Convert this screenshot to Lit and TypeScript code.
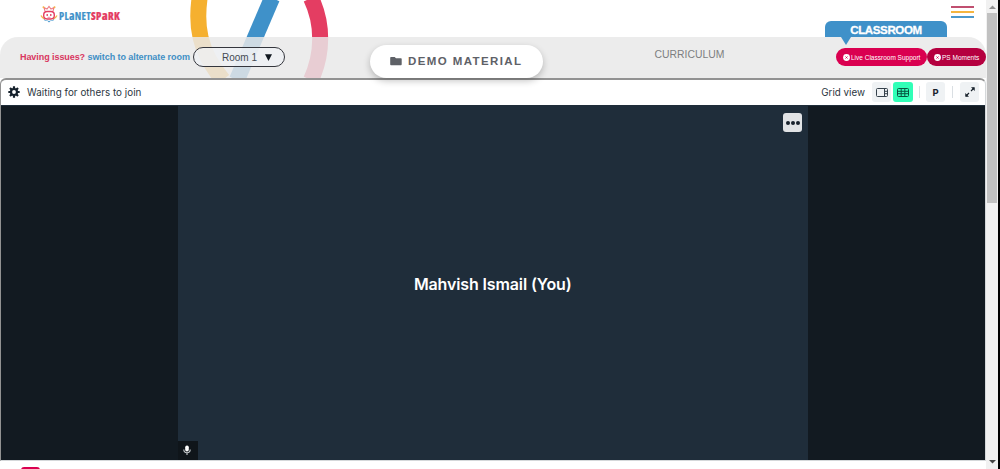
import { LitElement, css, html, svg } from "lit"
import { customElement, property } from "lit/decorators.js"

const gearTeeth = [0, 45, 90, 135, 180, 225, 270, 315]

@customElement("page-header")
export class PageHeader extends LitElement {
  render() {
    return html`
      <svg class="rings" width="145" height="78" viewBox="186 0 145 78">
        <path d="M199.600 -2C196 24 198 50 223 80" stroke="#f5b02f" />
        <path d="M272 -2L237 80" stroke="#3f91c9" />
        <path d="M311 -2C323.500 24 323 54 311 80" stroke="#e43d62" />
      </svg>
      <div class="top">
        <div class="logo">
          <svg width="18" height="18" viewBox="0 0 18 18" fill="none">
            <path d="M3 13Q9 19 15 13L13.500 15.500 10.500 16 9 17.500 7.500 16 4.500 15.500Z" fill="#4a9bd0" />
            <path d="M1 10.500Q2.500 13.500 5 14.200M17 10.500Q15.500 13.500 13 14.200" stroke="#f5b64a" stroke-width="1.400" />
            <rect x="3.700" y="6.500" width="10.600" height="7.500" rx="3.400" fill="#fff" stroke="#e43d62" stroke-width="1.400" />
            <path d="M5 6L4 2.500 7 4 9 1.500 11 4 14 2.500 13 6" stroke="#ee7b83" stroke-width="1.100" />
            <circle cx="3.500" cy="2.300" r="1" fill="#f5b64a" />
            <circle cx="14.500" cy="2.300" r="1" fill="#f5b64a" />
            <path d="M7.200 9V11M10.800 9V11" stroke="#e43d62" stroke-width="1.300" />
            <path d="M7.500 12.300H10.500" stroke="#e43d62" stroke-width=".6" />
          </svg>
          <span class="brand">PL<span class="small">a</span>NET<b>SP<span class="small">a</span>RK</b></span>
        </div>
        <div class="burger"><i></i><i></i><i></i></div>
        <div class="classroom">CLASSROOM</div>
      </div>
      <div class="bar">
        <span class="issues">Having issues? <span>switch to alternate room</span></span>
        <div class="room">
          <span>Room 1</span>
          <svg width="7" height="7" viewBox="0 0 7 7"><path d="M0 .3H7L3.500 7Z" fill="#111820" /></svg>
        </div>
        <div class="demo">
          <svg width="12" height="10" viewBox="0 0 12 10">
            <path d="M1 1H4.700L6 2.200H11Q11.700 2.200 11.700 3V8.300Q11.700 9.200 11 9.200H1Q.2 9.200 .2 8.300V1.800Q.2 1 1 1Z" fill="#5e6167" />
          </svg>
          <span>DEMO MATERIAL</span>
        </div>
        <span class="curriculum">CURRICULUM</span>
        <div class="actions">
          <div class="pill support">${this.dot()}<span>Live Classroom Support</span></div>
          <div class="pill moments">${this.dot()}<span>PS Moments</span></div>
        </div>
      </div>
    `
  }

  dot() {
    return html`<svg width="7" height="7" viewBox="0 0 7 7">
      <circle cx="3.500" cy="3.500" r="3.400" fill="#fff" />
      <path d="M2.500 2.500L4.500 4.500M4.500 2.500L2.500 4.500" stroke="#d40050" stroke-width=".9" />
    </svg>`
  }

  static styles = css`
    :host {
      display: block;
      position: relative;
      height: 78px;
      font-family: "Liberation Sans", Arial, sans-serif;
      white-space: nowrap;
    }
    svg {
      display: block;
      flex: none;
    }
    .rings {
      position: absolute;
      left: 186px;
      top: 0;
      fill: none;
      stroke-width: 16px;
    }
    .top {
      display: flex;
      height: 37px;
      justify-content: space-between;
      box-sizing: border-box;
      padding: 5px 12px 0 40px;
    }
    .logo {
      display: flex;
      gap: 1px;
      height: 18px;
    }
    .brand {
      color: #3f91c9;
      font: 700 10.4px/21px "Open Sans", sans-serif;
      font-stretch: 75%;
      letter-spacing: 0.3px;
      -webkit-text-stroke: 0.2px currentColor;
    }
    .brand b {
      color: #e43d62;
    }
    .small {
      font-size: 12px;
    }
    .burger {
      display: flex;
      flex-direction: column;
      gap: 3px;
      padding-top: 1px;
    }
    .burger i {
      width: 23px;
      height: 2px;
      background: #c04f70;
    }
    .burger i:nth-child(2) {
      background: #f5b540;
    }
    .burger i:nth-child(3) {
      background: #4c98cb;
    }
    .classroom {
      position: absolute;
      left: 825px;
      top: 21px;
      width: 122px;
      height: 16px;
      border-radius: 6px 6px 0 0;
      background: #3f91c9;
      color: #fff;
      font-size: 11.5px;
      font-weight: bold;
      line-height: 18px;
      text-align: center;
      letter-spacing: -0.35px;
      -webkit-text-stroke: 0.3px #fff;
      z-index: 2;
    }
    .classroom::after {
      content: "";
      position: absolute;
      left: 16px;
      top: 16px;
      border: solid transparent;
      border-width: 8px 5px 0;
      border-top-color: #3f91c9;
    }
    .bar {
      position: relative;
      display: flex;
      align-items: center;
      height: 41px;
      box-sizing: border-box;
      padding-left: 20px;
      background: rgba(232, 232, 232, 0.84);
      border-radius: 18px 18px 0 0;
    }
    .issues {
      width: 173px;
      margin-top: -2px;
      color: #d93660;
      font-size: 9px;
      font-weight: bold;
      letter-spacing: -0.07px;
    }
    .issues span {
      color: #3f8fc5;
    }
    .room {
      display: flex;
      align-items: center;
      width: 92px;
      height: 20px;
      box-sizing: border-box;
      margin-top: -1px;
      padding-left: 28px;
      gap: 8px;
      border: 1px solid #34363d;
      border-radius: 10px;
      background: rgba(239, 242, 245, 0.75);
      color: #454b54;
      font-size: 10px;
    }
    .demo {
      display: flex;
      align-items: center;
      gap: 6px;
      width: 173px;
      height: 33px;
      box-sizing: border-box;
      margin: 7px 0 0 85px;
      padding-left: 20px;
      border-radius: 17px;
      background: #fff;
      box-shadow: 0 3px 7px rgba(0, 0, 0, 0.23);
      color: #5e6167;
      font-size: 11.5px;
      font-weight: bold;
      letter-spacing: 1.4px;
    }
    .curriculum {
      width: 181.5px;
      margin: -6px 0 0 111.5px;
      color: #7d7e80;
      font-size: 10.4px;
    }
    .actions {
      display: flex;
      margin-top: -1px;
    }
    .pill {
      display: flex;
      align-items: center;
      box-sizing: border-box;
      height: 18px;
      gap: 1px;
      padding-left: 7px;
      border-radius: 9px;
      background: #da0050;
      color: #fff;
      font-size: 6.5px;
    }
    .support {
      width: 91px;
    }
    .moments {
      width: 59px;
      background: #b5003f;
    }
  `
}

@customElement("tool-button")
export class ToolButton extends LitElement {
  @property({ type: Boolean, reflect: true }) active = false

  render() {
    return html`<slot></slot>`
  }

  static styles = css`
    :host {
      display: flex;
      align-items: center;
      justify-content: center;
      width: 19px;
      height: 20px;
      border-radius: 3px;
      background: #eff2f4;
      color: #17212b;
      font: bold 9.5px "Inter", sans-serif;
    }
    :host([active]) {
      width: 20px;
      background: #30ffb7;
    }
  `
}

@customElement("call-room")
export class CallRoom extends LitElement {
  render() {
    return html`
      <div class="toolbar">
        <svg width="12" height="12" viewBox="-6 -6 12 12">
          <circle r="3" fill="none" stroke="#15202b" stroke-width="2.200" />
          ${gearTeeth.map(
            (a) => svg`<rect x="-1.100" y="-5.700" width="2.200" height="2.500" rx=".3" fill="#15202b" transform="rotate(${a})" />`
          )}
        </svg>
        <span class="status">Waiting for others to join</span>
        <span class="view">Grid view</span>
        <tool-button>
          <svg width="12" height="9" viewBox="0 0 12 9" fill="none" stroke="#35414b">
            <rect x=".5" y=".5" width="11" height="8" rx="1" />
            <path d="M8.500 1V8M8.500 3.300H11.500M8.500 5.700H11.500" />
          </svg>
        </tool-button>
        <tool-button class="grid" active>
          <svg width="12" height="9" viewBox="0 0 12 9" fill="none" stroke="#075440">
            <rect x=".5" y=".5" width="11" height="8" rx="1" />
            <path d="M4.200 1V8M7.800 1V8M.5 3.300H11.500M.5 5.700H11.500" />
          </svg>
        </tool-button>
        <i class="rule"></i>
        <tool-button>P</tool-button>
        <i class="rule second"></i>
        <tool-button>
          <svg width="10" height="10" viewBox="0 0 10 10" fill="none" stroke="#17212b" stroke-width="1.200">
            <path d="M6 4L9 1M4 6L1 9" />
            <path d="M6 .3H9.700V4ZM.3 6V9.700H4Z" fill="#17212b" stroke="none" />
          </svg>
        </tool-button>
      </div>
      <div class="stage">
        <div class="tile">
          <span class="name">Mahvish Ismail (You)</span>
          <div class="more"><i></i><i></i><i></i></div>
          <div class="mic">
            <svg width="8" height="11" viewBox="0 0 8 11" fill="none">
              <rect x="2.200" y=".5" width="3.600" height="6" rx="1.800" fill="#fff" />
              <path d="M.8 4.500Q.8 7.700 4 7.700T7.200 4.500M4 7.700V10" stroke="#c5c9cc" stroke-width="1.100" />
            </svg>
          </div>
        </div>
      </div>
    `
  }

  static styles = css`
    :host {
      display: block;
      box-sizing: border-box;
      height: 383px;
      border: 1px solid #d5d8da;
      border-top: 2px solid #929292;
      border-left-color: #929292;
      border-radius: 6px 6px 0 0;
      background: #fff;
      overflow: hidden;
      font-family: "Inter", sans-serif;
      white-space: nowrap;
    }
    svg {
      display: block;
      flex: none;
    }
    .toolbar {
      display: flex;
      align-items: center;
      height: 24px;
      padding: 0 6px 1px 7px;
      color: #2b3640;
      font-size: 9.8px;
    }
    .status {
      margin-left: 7px;
      letter-spacing: 0.05px;
    }
    .view {
      margin: 0 7px 0 auto;
    }
    .grid {
      margin-left: 2px;
    }
    .rule {
      width: 1px;
      height: 12px;
      margin: 0 6px;
      background: #dadfe3;
    }
    .second {
      margin: 0 7px;
    }
    .stage {
      display: flex;
      height: 354px;
      padding: 0 177px 0 176.5px;
      border-top: 1px solid #1f2d3a;
      background: #121a21;
    }
    .tile {
      position: relative;
      display: flex;
      flex: 1;
      align-items: center;
      justify-content: center;
      background: #1f2d3a;
      color: #fff;
    }
    .name {
      padding-top: 2px;
      font-size: 16px;
      font-weight: 600;
      letter-spacing: -0.13px;
    }
    .more {
      position: absolute;
      right: 6px;
      top: 7px;
      display: flex;
      align-items: center;
      justify-content: center;
      gap: 1px;
      width: 19px;
      height: 19px;
      border-radius: 3px;
      background: #e1e3e5;
    }
    .more i {
      width: 4px;
      height: 4px;
      border-radius: 50%;
      background: #17212b;
    }
    .mic {
      position: absolute;
      left: 0;
      bottom: 0;
      display: flex;
      align-items: center;
      justify-content: center;
      width: 20px;
      height: 19px;
      padding-right: 2px;
      box-sizing: border-box;
      background: #0f151a;
    }
  `
}

@customElement("app-root")
export class AppRoot extends LitElement {
  render() {
    return html`
      <main>
        <page-header></page-header>
        <call-room></call-room>
        <div class="below"><i></i></div>
      </main>
      <aside>
        <svg width="7" height="4" viewBox="0 0 7 4"><path d="M0 4L3.500 .5 7 4Z" fill="#909090" /></svg>
        <div class="thumb"></div>
        <svg width="7" height="4" viewBox="0 0 7 4"><path d="M0 0H7L3.500 3.500Z" fill="#454545" /></svg>
      </aside>
    `
  }

  static styles = css`
    :host {
      display: flex;
      width: 1000px;
      height: 469px;
      overflow: hidden;
      background: #fff;
    }
    main {
      width: 986px;
    }
    .below {
      display: flex;
      padding: 6px 0 0 21px;
    }
    .below i {
      width: 19px;
      height: 10px;
      border-radius: 3px;
      background: #da0050;
    }
    aside {
      display: flex;
      flex-direction: column;
      align-items: center;
      width: 12px;
      height: 459px;
      padding: 5px 0;
      background: #f1f1f1;
      border-right: 2px solid #000;
    }
    .thumb {
      width: 10px;
      height: 190px;
      margin: 4px 0 auto;
      background: #c1c1c1;
    }
  `
}
